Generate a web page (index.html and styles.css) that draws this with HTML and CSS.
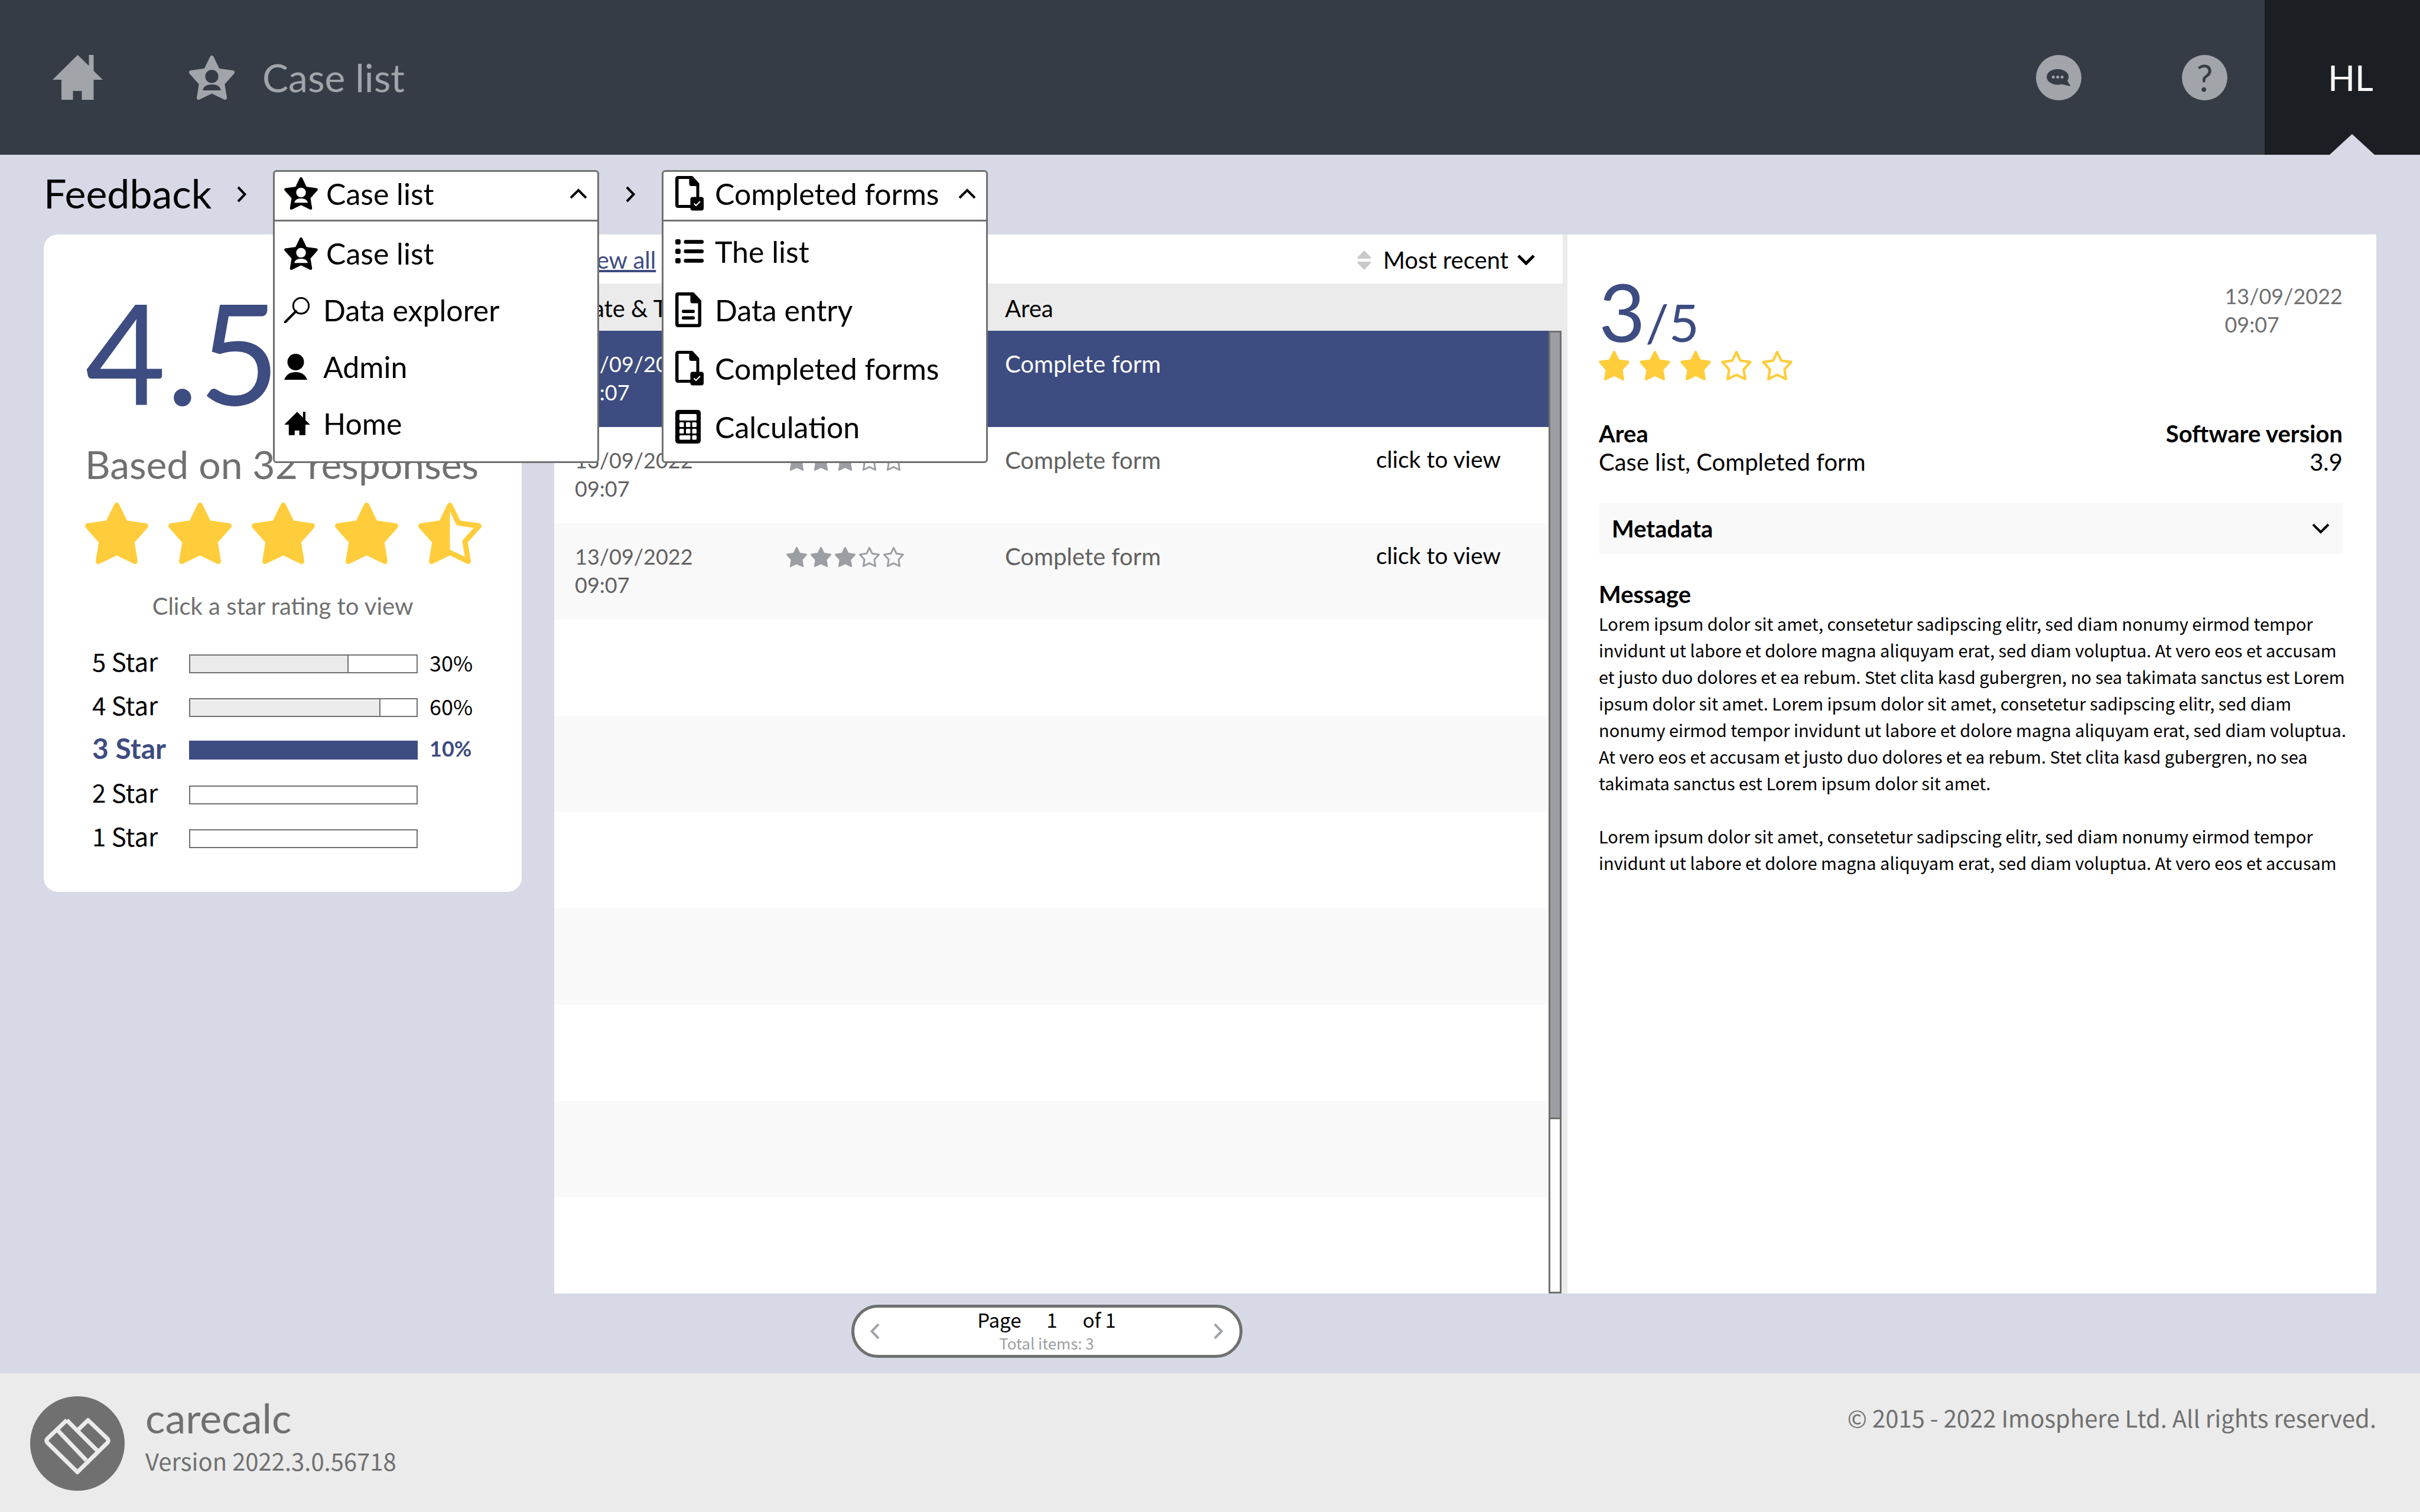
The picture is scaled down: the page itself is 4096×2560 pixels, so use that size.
FILE: index.html
```html
<!DOCTYPE html>
<html lang="en">
<head>
<meta charset="utf-8">
<meta name="viewport" content="width=device-width, initial-scale=1">
<title>Feedback - carecalc</title>
<link rel="stylesheet" href="styles.css">
</head>
<body>
<svg class="sprite" aria-hidden="true">
  <symbol id="home" viewBox="0 0 85 76"><path fill="currentColor" d="M42.5 0L61.5 18.5V0H69.500V27L85 42H69.500V76H49.500V61H34.500V76H15V42H0Z"/></symbol>
  <symbol id="star" viewBox="0 0 107 104"><path class="star-line star-fill" d="M53.500 4.500L68 34.500L102.500 39.500L79 66L84.500 99.500L53.500 84.500L22.500 99.500L28 66L4.500 39.500L39 34.500Z"/></symbol>
  <symbol id="star-empty" viewBox="0 0 107 104"><path class="star-line" fill="none" d="M53.500 4.500L68 34.500L102.500 39.500L79 66L84.500 99.500L53.500 84.500L22.500 99.500L28 66L4.500 39.500L39 34.500Z"/></symbol>
  <symbol id="star-half" viewBox="0 0 107 104"><path class="star-line" fill="none" d="M53.500 4.500L68 34.500L102.500 39.500L79 66L84.500 99.500L53.500 84.500L22.500 99.500L28 66L4.500 39.500L39 34.500Z"/><path fill="currentColor" d="M53.500 4.500V84.500L22.500 99.500L28 66L4.500 39.500L39 34.500Z"/></symbol>
  <symbol id="star-person" viewBox="0 0 107 104"><path class="star-line star-fill" d="M53.500 4.500L68 34.500L102.500 39.500L79 66L84.500 99.500L53.500 84.500L22.500 99.500L28 66L4.500 39.500L39 34.500Z"/><circle class="cut" cx="53.500" cy="49" r="15.500"/><path class="cut" d="M32 82C34 72 42 68 53.500 68S73 72 75 82Z"/></symbol>
  <symbol id="chat" viewBox="0 0 77 77"><circle cx="38.500" cy="38.500" r="38.500" fill="currentColor"/><ellipse class="cut" cx="36.700" cy="37.200" rx="18.600" ry="13.200"/><path class="cut" d="M53.400 43.500C54 47 57 49 58.200 51.600Q58 52.800 56.500 52.600L43 49.500Z"/><g fill="currentColor"><circle cx="29.400" cy="37.400" r="2.500"/><circle cx="36.800" cy="37.400" r="2.500"/><circle cx="44.200" cy="37.400" r="2.500"/></g></symbol>
  <symbol id="search" viewBox="0 0 43 44"><circle cx="28.500" cy="14.800" r="13.200" fill="none" stroke="currentColor" stroke-width="3"/><path d="M20 24L1.500 42.500" stroke="currentColor" stroke-width="4" stroke-linecap="round"/></symbol>
  <symbol id="user" viewBox="0 0 39 44"><circle cx="19.500" cy="14" r="14" fill="currentColor"/><path fill="currentColor" d="M0 44C4 34 11 31 19.500 31S35 34 39 44Z"/></symbol>
  <symbol id="form-done" viewBox="0 0 48 59"><path fill="currentColor" fill-rule="evenodd" d="M5 0H29L40.500 12.500V36H35.500V17H27Q23.500 17 23.500 13V5H5.500V49H26V54H5Q0 54 0 49V5Q0 0 5 0Z"/><rect x="25.500" y="35.500" width="22.500" height="23" rx="4" fill="currentColor"/><path class="tick" d="M31.500 46.500L35 50L42 43"/></symbol>
  <symbol id="form" viewBox="0 0 44 59"><path fill="currentColor" fill-rule="evenodd" d="M5 0H31L44 14V54Q44 59 39 59H5Q0 59 0 54V5Q0 0 5 0ZM5.500 5.500V53.500H38.500V18.500H29Q25.500 18.500 25.500 15V5.500Z"/><rect x="11" y="29.500" width="22" height="5.500" rx="2.500" fill="currentColor"/><rect x="11" y="40.500" width="22" height="5.500" rx="2.500" fill="currentColor"/></symbol>
  <symbol id="list" viewBox="0 0 48 41"><g fill="currentColor"><rect width="9" height="9" rx="3"/><rect y="16" width="9" height="9" rx="3"/><rect y="32" width="9" height="9" rx="3"/><rect x="14.500" y="1.200" width="33.500" height="6.600" rx="3"/><rect x="14.500" y="17.200" width="33.500" height="6.600" rx="3"/><rect x="14.500" y="33.200" width="33.500" height="6.600" rx="3"/></g></symbol>
  <symbol id="calc" viewBox="0 0 43 57"><rect width="43" height="57" rx="5" fill="currentColor"/><g class="cut"><rect x="7" y="7" width="29" height="11" rx="1.500"/><rect x="7" y="21" width="7.500" height="8" rx="1.500"/><rect x="18" y="21" width="7.500" height="8" rx="1.500"/><rect x="28.500" y="21" width="7.500" height="8" rx="1.500"/><rect x="7" y="32" width="7.500" height="8" rx="1.500"/><rect x="18" y="32" width="7.500" height="8" rx="1.500"/><rect x="28.500" y="32" width="7.500" height="8" rx="1.500"/><rect x="7" y="43" width="18.500" height="7.500" rx="1.500"/><rect x="28.500" y="43" width="7.500" height="7.500" rx="1.500"/></g></symbol>
  <symbol id="right" viewBox="0 0 18 28"><path class="stroke" d="M3 2L14.500 14L3 26"/></symbol>
  <symbol id="left" viewBox="0 0 18 28"><path class="stroke" d="M15 2L3.500 14L15 26"/></symbol>
  <symbol id="up" viewBox="0 0 30 18"><path class="stroke" d="M2 16L15 3L28 16"/></symbol>
  <symbol id="down" viewBox="0 0 30 18"><path class="stroke" d="M2 2L15 15L28 2"/></symbol>
  <symbol id="sort" viewBox="0 0 24 33"><path fill="currentColor" stroke="currentColor" stroke-width="3" stroke-linejoin="round" d="M2 12.500L12 2L22 12.500ZM2 20.500L12 31L22 20.500Z"/></symbol>
</svg>

<header class="topbar">
  <a class="icon-link" href="#" aria-label="Home"><svg class="home-icon"><use href="#home"/></svg></a>
  <a class="section-link" href="#"><svg class="section-icon"><use href="#star-person"/></svg>Case list</a>
  <button class="round-button" type="button" aria-label="Chat"><svg class="round-icon"><use href="#chat"/></svg></button>
  <button class="round-button help" type="button" aria-label="Help">?</button>
  <button class="account" type="button">HL</button>
</header>

<main class="page">
  <nav class="crumbs" aria-label="Breadcrumb">
    <h1 class="crumb-title">Feedback</h1>
    <svg class="crumb-arrow"><use href="#right"/></svg>
    <div class="dropdown">
      <button class="dropdown-toggle" type="button" aria-expanded="true"><span class="slot"><svg class="i-star"><use href="#star-person"/></svg></span>Case list<svg class="toggle-arrow"><use href="#up"/></svg></button>
      <ul class="menu">
        <li><a href="#"><span class="slot"><svg class="i-star"><use href="#star-person"/></svg></span>Case list</a></li>
        <li><a href="#"><span class="slot"><svg class="i-search"><use href="#search"/></svg></span>Data explorer</a></li>
        <li><a href="#"><span class="slot"><svg class="i-user"><use href="#user"/></svg></span>Admin</a></li>
        <li><a href="#"><span class="slot"><svg class="i-home"><use href="#home"/></svg></span>Home</a></li>
      </ul>
    </div>
    <svg class="crumb-arrow"><use href="#right"/></svg>
    <div class="dropdown forms">
      <button class="dropdown-toggle" type="button" aria-expanded="true"><span class="slot"><svg class="i-done"><use href="#form-done"/></svg></span>Completed forms<svg class="toggle-arrow"><use href="#up"/></svg></button>
      <ul class="menu">
        <li><a href="#"><span class="slot"><svg class="i-list"><use href="#list"/></svg></span>The list</a></li>
        <li><a href="#"><span class="slot"><svg class="i-form"><use href="#form"/></svg></span>Data entry</a></li>
        <li><a href="#"><span class="slot"><svg class="i-done"><use href="#form-done"/></svg></span>Completed forms</a></li>
        <li><a href="#"><span class="slot"><svg class="i-calc"><use href="#calc"/></svg></span>Calculation</a></li>
      </ul>
    </div>
  </nav>

  <div class="columns">
    <section class="summary">
      <p class="average">4.5</p>
      <p class="based">Based on 32 responses</p>
      <div class="stars big"><svg><use href="#star"/></svg><svg><use href="#star"/></svg><svg><use href="#star"/></svg><svg><use href="#star"/></svg><svg><use href="#star-half"/></svg></div>
      <p class="hint">Click a star rating to view</p>
      <div class="bars">
        <button class="bar-row" type="button"><span class="bar-label">5 Star</span><span class="bar"><span class="bar-fill" style="width:70%"></span></span><span class="bar-value">30%</span></button>
        <button class="bar-row" type="button"><span class="bar-label">4 Star</span><span class="bar"><span class="bar-fill" style="width:84%"></span></span><span class="bar-value">60%</span></button>
        <button class="bar-row selected" type="button"><span class="bar-label">3 Star</span><span class="bar"></span><span class="bar-value">10%</span></button>
        <button class="bar-row" type="button"><span class="bar-label">2 Star</span><span class="bar"></span></button>
        <button class="bar-row" type="button"><span class="bar-label">1 Star</span><span class="bar"></span></button>
      </div>
    </section>

    <section class="list">
      <div class="toolbar">
        <a class="view-all" href="#">View all</a>
        <svg class="sort-icon"><use href="#sort"/></svg>
        <select class="sort" aria-label="Sort order"><option>Most recent</option></select>
        <svg class="sort-arrow"><use href="#down"/></svg>
      </div>
      <div class="table-area">
        <table>
          <thead><tr><th class="c-date">Date &amp; Time</th><th class="c-rating" aria-label="Rating"></th><th class="c-area">Area</th><th class="c-view"></th></tr></thead>
          <tbody>
            <tr class="current"><td class="date">13/09/2022<br>09:07</td><td class="rating"><span class="stars small"><svg><use href="#star"/></svg><svg><use href="#star"/></svg><svg><use href="#star"/></svg><svg><use href="#star-empty"/></svg><svg><use href="#star-empty"/></svg></span></td><td>Complete form</td><td></td></tr>
            <tr><td class="date">13/09/2022<br>09:07</td><td class="rating"><span class="stars small"><svg><use href="#star"/></svg><svg><use href="#star"/></svg><svg><use href="#star"/></svg><svg><use href="#star-empty"/></svg><svg><use href="#star-empty"/></svg></span></td><td>Complete form</td><td class="view"><a href="#">click to view</a></td></tr>
            <tr><td class="date">13/09/2022<br>09:07</td><td class="rating"><span class="stars small"><svg><use href="#star"/></svg><svg><use href="#star"/></svg><svg><use href="#star"/></svg><svg><use href="#star-empty"/></svg><svg><use href="#star-empty"/></svg></span></td><td>Complete form</td><td class="view"><a href="#">click to view</a></td></tr>
            <tr><td colspan="4"></td></tr>
            <tr><td colspan="4"></td></tr>
            <tr><td colspan="4"></td></tr>
            <tr><td colspan="4"></td></tr>
            <tr><td colspan="4"></td></tr>
            <tr><td colspan="4"></td></tr>
            <tr><td colspan="4"></td></tr>
          </tbody>
        </table>
        <div class="scroll-column"><div class="scrollbar"><div class="scroll-thumb"></div></div></div>
      </div>
    </section>

    <article class="detail">
      <div class="detail-head">
        <div>
          <p class="score">3<span class="score-of">/5</span></p>
          <div class="stars medium"><svg><use href="#star"/></svg><svg><use href="#star"/></svg><svg><use href="#star"/></svg><svg><use href="#star-empty"/></svg><svg><use href="#star-empty"/></svg></div>
        </div>
        <p class="when date">13/09/2022<br>09:07</p>
      </div>
      <dl class="facts">
        <div><dt>Area</dt><dd>Case list, Completed form</dd></div>
        <div class="fact-end"><dt>Software version</dt><dd>3.9</dd></div>
      </dl>
      <button class="metadata" type="button" aria-expanded="false">Metadata<svg><use href="#down"/></svg></button>
      <h2 class="message-title">Message</h2>
      <p class="message">Lorem ipsum dolor sit amet, consetetur sadipscing elitr, sed diam nonumy eirmod tempor invidunt ut labore et dolore magna aliquyam erat, sed diam voluptua. At vero eos et accusam et justo duo dolores et ea rebum. Stet clita kasd gubergren, no sea takimata sanctus est Lorem ipsum dolor sit amet. Lorem ipsum dolor sit amet, consetetur sadipscing elitr, sed diam nonumy eirmod tempor invidunt ut labore et dolore magna aliquyam erat, sed diam voluptua. At vero eos et accusam et justo duo dolores et ea rebum. Stet clita kasd gubergren, no sea takimata sanctus est Lorem ipsum dolor sit amet.</p>
      <p class="message">Lorem ipsum dolor sit amet, consetetur sadipscing elitr, sed diam nonumy eirmod tempor invidunt ut labore et dolore magna aliquyam erat, sed diam voluptua. At vero eos et accusam</p>
    </article>

    <div class="pager-area">
      <nav class="pager" aria-label="Pages">
        <button type="button" aria-label="Previous page"><svg><use href="#left"/></svg></button>
        <div class="pager-text">
          <div class="pager-line"><label for="page-number">Page</label><input id="page-number" type="text" value="1"><span>of 1</span></div>
          <p class="total">Total items: 3</p>
        </div>
        <button type="button" aria-label="Next page"><svg><use href="#right"/></svg></button>
      </nav>
    </div>
  </div>
</main>

<footer class="footer">
  <svg class="logo" viewBox="0 0 160 160" role="img" aria-label="carecalc logo"><circle cx="80" cy="80" r="80" fill="currentColor"/><path d="M62 40.500L29 72Q26.500 75 29 78.500L80 128.500L131 78.500Q133.500 75 131 72L98 40.500L82 56M62 40.500L113 91.500M46 57L95 108.500" fill="none" stroke="#ebebeb" stroke-width="7" stroke-linejoin="round"/></svg>
  <div>
    <p class="product">carecalc</p>
    <p class="version">Version 2022.3.0.56718</p>
  </div>
  <p class="copyright">© 2015 - 2022 Imosphere Ltd. All rights reserved.</p>
</footer>
</body>
</html>
```
FILE: styles.css
```css
:root {
  --slate: #363c46;
  --ink: #1b1e23;
  --blue: #3d4c81;
  --grey: #707070;
  --silver: #a1a4a9;
  --line: #ebebeb;
  --stripe: #f9f9f9;
  --page: #d7d9e6;
  --yellow: #ffcd3c;
  --cut: #fff;
  --display: Lato, sans-serif;
  --text: "Noto Sans CJK SC", sans-serif;
}

* { box-sizing: border-box; }

body {
  margin: 0;
  min-height: 100vh;
  display: flex;
  flex-direction: column;
  background: var(--page);
  color: #000;
  font: 400 40px/48px var(--display);
}

h1, h2, p, ul, dl, dd { margin: 0; padding: 0; }
ul { list-style: none; }
svg { display: block; flex: none; }
a { color: inherit; text-decoration: none; }
button, input, select {
  margin: 0;
  padding: 0;
  border: 0;
  background: none;
  color: inherit;
  font: inherit;
}

.sprite { position: absolute; width: 0; height: 0; }
.star-line { stroke: currentColor; stroke-width: 9px; stroke-linejoin: round; }
.star-fill { fill: currentColor; }
.cut { fill: var(--cut); }
.tick { fill: none; stroke: #fff; stroke-width: 2px; }
.stroke { fill: none; stroke: currentColor; stroke-width: var(--stroke, 4px); }

/* Top bar */
.topbar {
  --cut: var(--slate);
  display: flex;
  align-items: center;
  height: 262px;
  padding-left: 89px;
  background: var(--slate);
  color: var(--silver);
}
.home-icon { width: 85px; height: 76px; }
.section-link {
  display: flex;
  align-items: center;
  gap: 47px;
  margin: 0 auto 0 146px;
  font-size: 66px;
  line-height: 80px;
}
.section-icon { width: 77px; height: 75px; }
.round-button { width: 77px; height: 77px; margin-right: 170px; }
.round-icon { width: 77px; height: 77px; }
.help {
  margin-right: 63px;
  border-radius: 50%;
  background: var(--silver);
  color: var(--slate);
  font-size: 62px;
}
.account {
  position: relative;
  width: 263px;
  height: 262px;
  padding-left: 28px;
  background: var(--ink);
  color: #fff;
  font-size: 60px;
}
.account::after {
  content: "";
  position: absolute;
  right: 77px;
  bottom: 0;
  border: 38px solid transparent;
  border-top: 0;
  border-bottom: 35px solid var(--page);
}

/* Breadcrumb and its menus */
.page { flex: 1; padding: 26px 74px 22px; }
.crumbs {
  display: flex;
  align-items: center;
  gap: 44px;
  height: 87px;
  margin-bottom: 22px;
}
.crumb-title {
  width: 282px;
  padding-bottom: 10px;
  font-size: 68px;
  font-weight: 400;
  line-height: 80px;
  white-space: nowrap;
}
.crumb-arrow { width: 18px; height: 28px; margin-bottom: 6px; }
.dropdown {
  position: relative;
  z-index: 1;
  width: 552px;
  font-size: 50px;
  line-height: 60px;
  white-space: nowrap;
}
.dropdown-toggle, .menu {
  border: 3px solid var(--grey);
  background: #fff;
}
.dropdown-toggle {
  display: flex;
  align-items: center;
  gap: 14px;
  width: 100%;
  height: 87px;
  padding: 0 17px 8px 16px;
  border-radius: 6px 6px 0 0;
}
.toggle-arrow { width: 30px; height: 18px; margin-left: auto; }
.menu {
  position: absolute;
  top: 84px;
  left: 0;
  right: 0;
  padding: 6px 0 16px;
  border-radius: 0 0 6px 6px;
}
.menu a {
  display: flex;
  align-items: center;
  gap: 14px;
  height: 96px;
  padding-left: 16px;
}
.slot { min-width: 52px; }
.forms .dropdown-toggle { gap: 19px; padding-left: 20px; }
.forms .menu { padding: 1px 0 9px; }
.forms .menu a { gap: 19px; height: 99px; padding-left: 20px; }
.forms .slot { min-width: 48px; }
.i-star { width: 57px; height: 55px; }
.i-search { width: 43px; height: 44px; }
.i-user { width: 39px; height: 44px; }
.i-home { width: 44px; height: 40px; }
.i-done { width: 48px; height: 59px; }
.i-list { width: 48px; height: 41px; }
.i-form { width: 44px; height: 59px; }
.i-calc { width: 43px; height: 57px; }

/* Three columns, with the pager below the list */
.columns {
  display: grid;
  grid-template-columns: 809px minmax(0, 1770fr) minmax(0, 1369fr);
  row-gap: 19px;
}
.stars { display: flex; color: var(--yellow); }

.summary {
  align-self: start;
  padding: 88px 70px 71px;
  border-radius: 24px;
  background: #fff;
}
.average {
  color: var(--blue);
  font-size: 236px;
  line-height: 220px;
}
.based {
  margin-top: 41px;
  color: var(--grey);
  font-size: 66px;
  line-height: 80px;
  white-space: nowrap;
}
.big { gap: 34px; margin-top: 25px; }
.big svg { width: 107px; height: 104px; }
.hint { margin-top: 47px; color: var(--grey); text-align: center; }
.bars {
  display: grid;
  gap: 26px;
  margin: 45px 0 0 12px;
  font-family: var(--text);
}
.bar-row {
  display: grid;
  grid-template-columns: 164px 387px 1fr;
  align-items: center;
  height: 48px;
  text-align: left;
}
.bar-label { padding-bottom: 10px; font-size: 42px; }
.bar-value { padding: 0 0 6px 20px; font-size: 36px; }
.bar { height: 32px; border: 2px solid var(--grey); }
.bar-fill {
  display: block;
  height: 100%;
  border-right: 2px solid var(--grey);
  background: var(--line);
}
.selected { color: var(--blue); font-family: var(--display); font-weight: 700; }
.selected .bar-label { padding-bottom: 6px; font-size: 48px; }
.selected .bar { border-color: var(--blue); background: var(--blue); }

.list {
  display: flex;
  flex-direction: column;
  margin-left: 55px;
  border-right: 8px solid var(--line);
  background: #fff;
}
.toolbar {
  display: flex;
  align-items: center;
  height: 83px;
  padding: 3px 47px 0 35px;
}
.view-all { margin-right: auto; color: var(--blue); text-decoration: underline; }
.sort-icon { width: 24px; height: 33px; margin-right: 20px; color: #c9c9c9; }
.sort { appearance: none; }
.sort-arrow { --stroke: 5px; width: 30px; height: 18px; margin-left: 14px; }
.table-area { flex: 1; display: flex; }
table {
  flex: 1;
  align-self: flex-start;
  table-layout: fixed;
  border-collapse: collapse;
}
th { height: 80px; padding: 4px 0 0; background: var(--line); font-weight: 400; text-align: left; }
td { height: 163px; padding: 32px 0 0; vertical-align: top; color: #616161; }
th:first-child, td:first-child { padding-left: 35px; }
.date { font-size: 36px; }
.c-date { width: 393px; }
.c-rating { width: 370px; }
.c-area { width: 628px; }
tbody tr:nth-child(odd) { background: var(--stripe); }
tbody tr.current { background: var(--blue); }
.current td { color: #fff; }
.rating { padding-top: 40px; }
.small { gap: 6px; color: #9b9ea3; }
.small svg { width: 35px; height: 34px; }
.current .small { color: #fff; }
.view { padding-top: 30px; color: #000; font-size: 39px; }
.scroll-column { width: 24px; padding: 80px 2px 0 0; background: var(--line); }
.scrollbar { height: 100%; border: 3px solid var(--grey); background: #fff; }
.scroll-thumb { height: 82%; border-bottom: 3px solid var(--grey); background: #9b9ea3; }

.detail { padding: 80px 57px 78px 53px; background: #fff; }
.detail-head { display: flex; justify-content: space-between; }
.score { color: var(--blue); font-size: 136px; line-height: 100px; }
.score-of { font-size: 88px; line-height: 0; }
.medium { gap: 17px; margin-top: 17px; }
.medium svg { width: 52px; height: 50px; }
.when { color: var(--grey); }
.facts { display: flex; justify-content: space-between; margin-top: 66px; }
.fact-end { text-align: right; }
dt, .metadata, .message-title { font-size: 40px; font-weight: 700; }
.metadata {
  display: flex;
  align-items: center;
  justify-content: space-between;
  width: 100%;
  height: 87px;
  margin-top: 45px;
  padding: 0 22px;
  background: var(--stripe);
}
.metadata svg { width: 30px; height: 18px; }
.message-title { margin-top: 44px; }
.message {
  margin: 3px -12px 45px 0;
  font: 400 29px/45px var(--text);
}

.pager-area {
  grid-column: 2;
  display: flex;
  justify-content: center;
  margin-left: 55px;
  padding-right: 48px;
}
.pager {
  display: flex;
  align-items: center;
  justify-content: space-between;
  width: 662px;
  height: 90px;
  padding: 0 26px;
  border: 5px solid var(--grey);
  border-radius: 45px;
  background: #fff;
  font: 400 33px/40px var(--text);
  text-align: center;
}
.pager button { color: var(--silver); }
.pager svg { width: 18px; height: 28px; }
.pager-line { display: flex; gap: 24px; }
.pager-line input { width: 56px; height: 40px; text-align: center; }
.total { color: #9b9ea3; font-size: 26px; }

/* Footer */
.footer {
  display: flex;
  align-items: flex-start;
  padding: 37px 74px 36px 51px;
  background: var(--line);
  color: var(--grey);
  font-family: var(--text);
}
.logo { width: 160px; height: 160px; margin: 2px 35px 0 0; }
.product { font: 400 70px/76px var(--display); }
.version { font-size: 40px; line-height: 70px; }
.copyright { margin-left: auto; font-size: 40px; line-height: 76px; }
```
